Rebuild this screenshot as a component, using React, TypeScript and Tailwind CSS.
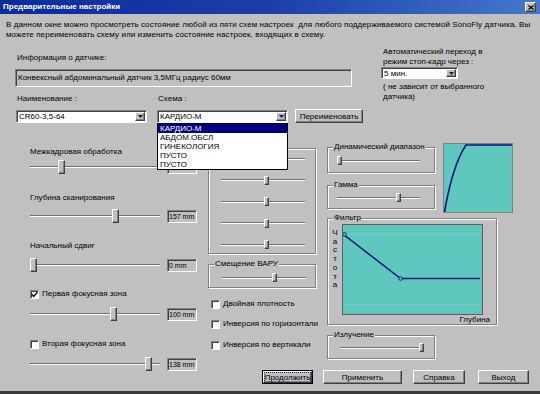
import React from 'react';

const raised = 'border border-t-white border-l-white border-b-[#404040] border-r-[#404040] shadow-[inset_-1px_-1px_0_#808080]';
const sunken = 'border border-t-[#808080] border-l-[#808080] border-b-white border-r-white shadow-[inset_1px_1px_0_#404040]';
const etched = 'border border-[#808080] shadow-[inset_1px_1px_0_#fff,1px_1px_0_#fff]';

const Slider: React.FC<{ className: string; pos: number; big?: boolean }> = ({ className, pos, big }) => (
    <div className={`relative ${className}`}>
        <div className="absolute left-0 right-0 top-1/2 -translate-y-1/2 h-[2px] border-t border-t-[#707070] border-b border-b-white" />
        <div className={`absolute top-0 ${big ? 'w-[7px] h-[14px]' : 'w-[5px] h-[9px]'} bg-[#c0c0c0] ${raised}`} style={{ left: pos }} />
    </div>
);

const SliderRow: React.FC<{ pos: number; value: string }> = ({ pos, value }) => (
    <div className="flex items-center h-[14px]">
        <Slider className="w-[130px] h-[14px]" pos={pos} big />
        <div className={`ml-[7px] w-[30px] h-[13px] ${sunken} pl-[1px] leading-[11px] text-[7px] whitespace-nowrap overflow-hidden bg-[#c0c0c0]`}>{value}</div>
    </div>
);

const Check: React.FC<{ checked?: boolean }> = ({ checked }) => (
    <span className={`w-[9px] h-[9px] bg-white ${sunken} flex items-center justify-center shrink-0`}>
        {checked && (
            <svg width="7" height="7" viewBox="0 0 7 7">
                <path d="M0.8 3.4 L2.6 5.4 L6.4 1.2" fill="none" stroke="#000" strokeWidth="1.4" />
            </svg>
        )}
    </span>
);

const CheckRow: React.FC<{ label: string; checked?: boolean; className?: string }> = ({ label, checked, className }) => (
    <div className={`flex items-center h-[10px] gap-[3px] whitespace-nowrap ${className ?? ''}`}>
        <Check checked={checked} />
        <span className="leading-[10px]">{label}</span>
    </div>
);

const Group: React.FC<{ label: string; className: string; children?: React.ReactNode }> = ({ label, className, children }) => (
    <div className={`relative ${etched} ${className}`}>
        <span className="absolute -top-[6px] left-[5px] px-[1px] bg-[#c0c0c0] leading-[10px] whitespace-nowrap">{label}</span>
        {children}
    </div>
);

const Combo: React.FC<{ text: string; className: string }> = ({ text, className }) => (
    <div className={`flex items-stretch bg-white ${sunken} p-[1px] ${className}`}>
        <span className="flex-1 pl-[1px] leading-[9px] self-center whitespace-nowrap">{text}</span>
        <span className={`w-[10px] bg-[#c0c0c0] ${raised} flex items-center justify-center`}>
            <svg width="5" height="3" viewBox="0 0 5 3"><path d="M0 0 H5 L2.5 3 Z" fill="#101060" /></svg>
        </span>
    </div>
);

const Btn: React.FC<{ label: string; className: string; focus?: boolean }> = ({ label, className, focus }) => (
    <button type="button" className={`${focus ? 'border border-black' : ''} ${className} p-0`}>
        <div className={`h-full w-full ${raised} bg-[#c0c0c0] flex items-center justify-center leading-[9px] whitespace-nowrap`}>
            <span className={focus ? 'outline outline-1 outline-dotted outline-[#202060]' : ''}>{label}</span>
        </div>
    </button>
);

const App: React.FC = () => {
    const items = ['КАРДИО-М', 'АБДОМ.ОБСЛ', 'ГИНЕКОЛОГИЯ', 'ПУСТО', 'ПУСТО'];
    return (
        <div className="w-[540px] h-[394px] bg-[#c0c0c0] flex flex-col border-b-[3px] border-[#3a3a3a] font-['Liberation_Sans',Arial,sans-serif] text-[8px] leading-[10px] text-black overflow-hidden">
            {/* title bar */}
            <div className="h-[14px] shrink-0 flex items-center justify-between bg-linear-to-r from-[#0c2a9c] via-[#1c3eaa] to-[#4478cc]">
                <span className="pl-[3px] text-white font-bold text-[8px]">Предварительные настройки</span>
                <span className={`mr-[4px] w-[11px] h-[10px] bg-[#c0c0c0] ${raised} flex items-center justify-center`}>
                    <svg width="6" height="5" viewBox="0 0 6 5"><path d="M0.5 0.5 L5.5 4.5 M5.5 0.5 L0.5 4.5" stroke="#000" strokeWidth="1.3" /></svg>
                </span>
            </div>

            {/* intro */}
            <div className="pt-[6px] px-[6px] whitespace-nowrap tracking-[0.08px]">
                В данном окне можно просмотреть состояние любой из пяти схем настроек&nbsp; для любого поддерживаемого системой SonoFly датчика. Вы
                <br />
                можете переименовать схему или изменить состояние настроек, входящих в схему.
            </div>

            {/* top area */}
            <div className="mt-[7px] flex items-start">
                <div className="ml-[15px] w-[348px] pt-[6px] flex flex-col">
                    <div className="pl-[2px]">Информация о датчике:</div>
                    <div className={`mt-[6px] w-[337px] h-[18px] ${sunken} pl-[2px] flex items-center`}>
                        Конвексный абдоминальный датчик 3,5МГц радиус 60мм
                    </div>
                    <div className="mt-[7px] flex items-end">
                        <div className="ml-[1px] w-[131px] flex flex-col">
                            <div className="pl-[1px]">Наименование :</div>
                            <Combo text="CR60-3,5-64" className="mt-[6px] h-[13px]" />
                        </div>
                        <div className="ml-[10px] w-[131px] flex flex-col">
                            <div className="pl-[1px]">Схема :</div>
                            <div className="relative mt-[6px]">
                                <Combo text="КАРДИО-М" className="h-[13px]" />
                                <div className="absolute z-10 top-full left-0 w-[131px] bg-white border border-black flex flex-col">
                                    {items.map((it, i) => (
                                        <div key={i} className={`h-[9px] leading-[9px] pl-[2px] ${i === 0 ? 'bg-[#000080] text-white' : ''}`}>{it}</div>
                                    ))}
                                </div>
                            </div>
                        </div>
                        <Btn label="Переименовать" className="ml-[7px] w-[68px] h-[14px]" />
                    </div>
                </div>
                <div className="ml-[18px] flex flex-col">
                    <div className="pl-[2px]">Автоматический переход в</div>
                    <div className="pl-[2px]">режим стоп-кадр через :</div>
                    <Combo text="5 мин." className="w-[77px] h-[12px]" />
                    <div className="mt-[3px] pl-[2px]">( не зависит от выбранного</div>
                    <div className="pl-[2px]">датчика)</div>
                </div>
            </div>

            {/* lower area */}
            <div className="flex">
                <div className="w-[200px] shrink-0 pl-[30px] flex flex-col">
                    <div className="mt-[24px]">Межкадровая обработка</div>
                    <div className="mt-[3px]"><SliderRow pos={28} value="" /></div>
                    <div className="mt-[19px]">Глубина сканирования</div>
                    <div className="mt-[6px]"><SliderRow pos={82} value="157 mm" /></div>
                    <div className="mt-[18px]">Начальный сдвиг</div>
                    <div className="mt-[7px]"><SliderRow pos={0} value="0 mm" /></div>
                    <CheckRow className="mt-[17px]" label="Первая фокусная зона" checked />
                    <div className="mt-[8px]"><SliderRow pos={80} value="100 mm" /></div>
                    <CheckRow className="mt-[18px]" label="Вторая фокусная зона" />
                    <div className="mt-[8px]"><SliderRow pos={115} value="138 mm" /></div>
                </div>

                <div className="flex-1 flex flex-col">
                    <div className="flex">
                        <div className="ml-[8px] w-[108px] shrink-0 flex flex-col">
                            <div className={`mt-[25px] h-[106px] ${etched} pl-[12px] pt-[5px] flex flex-col gap-[12.5px]`}>
                                {[43, 43, 43, 43, 43].map((p, i) => (
                                    <Slider key={i} className="w-[84px] h-[9px]" pos={p} />
                                ))}
                            </div>
                            <Group label="Смещение ВАРУ" className="mt-[10px] h-[24px] pl-[13px] pt-[8px]">
                                <Slider className="w-[84px] h-[9px]" pos={50} />
                            </Group>
                            <CheckRow className="mt-[11px] ml-[3px]" label="Двойная плотность" />
                            <CheckRow className="mt-[10px] ml-[3px]" label="Инверсия по горизонтали" />
                            <CheckRow className="mt-[11px] ml-[3px]" label="Инверсия по вертикали" />
                        </div>

                        <div className="ml-[11px] flex flex-col">
                            <div className="flex items-start">
                                <div className="w-[108px] mt-[24px] flex flex-col">
                                    <Group label="Динамический диапазон" className="h-[26px] pl-[9px] pt-[8px]">
                                        <Slider className="w-[83px] h-[9px]" pos={0} />
                                    </Group>
                                    <Group label="Гамма" className="mt-[12px] h-[24px] pl-[9px] pt-[7px]">
                                        <Slider className="w-[83px] h-[9px]" pos={59} />
                                    </Group>
                                </div>
                                <div className="ml-[8px] mt-[20px] w-[70px] h-[70px] border border-[#808080] bg-[#5ec8be]">
                                    <svg width="68" height="68" viewBox="0 0 68 68">
                                        <path d="M0.5 68 C5 42 12 16 22 1 L68 1" fill="none" stroke="#12127e" strokeWidth="1.6" />
                                    </svg>
                                </div>
                            </div>
                            <Group label="Фильтр" className="mt-[5px] w-[170px] h-[107px] pt-[5px] flex flex-col">
                                <div className="flex">
                                    <div className="w-[14px] pt-[5px] flex flex-col items-center leading-[8.7px]">
                                        {['Ч', 'а', 'с', 'т', 'о', 'т', 'а'].map((c, i) => <span key={i}>{c}</span>)}
                                    </div>
                                    <div className="w-[141px] h-[91px] border border-[#606060] bg-[#5ec8be]">
                                        <svg width="139" height="89" viewBox="0 0 139 89">
                                            <path d="M2 9.5 H137 M2 79.5 H137" stroke="#9cc4d8" strokeWidth="1" strokeDasharray="1 1" />
                                            <path d="M0.5 9.5 L57.5 53.5 L137 53.5" fill="none" stroke="#12127e" strokeWidth="1.5" />
                                            <circle cx="1.5" cy="9.5" r="1.8" fill="#5ec8be" stroke="#12127e" strokeWidth="1" />
                                            <circle cx="57.5" cy="53.5" r="1.8" fill="#5ec8be" stroke="#12127e" strokeWidth="1" />
                                        </svg>
                                    </div>
                                </div>
                                <div className="text-right pr-[6px]">Глубина</div>
                            </Group>
                            <Group label="Излучение" className="mt-[10px] w-[108px] h-[24px] pl-[12px] pt-[7px]">
                                <Slider className="w-[83px] h-[9px]" pos={79} />
                            </Group>
                        </div>
                    </div>

                    <div className="mt-[11px] pl-[62px] flex">
                        <Btn label="Продолжить" className="w-[51px] h-[14px]" focus />
                        <Btn label="Применить" className="ml-[10px] w-[79px] h-[14px]" />
                        <Btn label="Справка" className="ml-[11px] w-[52px] h-[14px]" />
                        <Btn label="Выход" className="ml-[13px] w-[51px] h-[14px]" />
                    </div>
                </div>
            </div>
        </div>
    );
};

export default App;
